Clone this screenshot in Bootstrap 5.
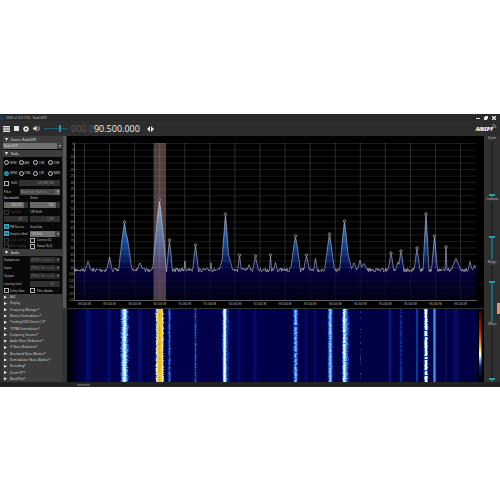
<!DOCTYPE html>
<html lang="en">
<head>
<meta charset="utf-8">
<meta name="viewport" content="width=device-width, initial-scale=1">
<title>SDR# spectrum receiver</title>
<link href="https://cdn.jsdelivr.net/npm/bootstrap@5.3.0/dist/css/bootstrap.min.css" rel="stylesheet">
<style>
body{background:#fff;font-family:"Open Sans","Liberation Sans",sans-serif;font-size:3px;line-height:4px;color:#d8d8d8}
main{padding-top:114px}
.app{background:#2b2b2b}
.titlebar{height:7px;background:#292929;color:#c4c4c4}
.appicon{width:4px;height:4px;background:#163b58;margin-right:2px}
.tools{height:15px;gap:4px;padding:0 3px;background:#2d2d2d}
.tools button,.titlebar button{border:0;background:none;padding:0;line-height:0;color:#e4e4e4}
.tools svg,.titlebar svg{display:block;fill:currentColor}
.freq{font-size:9px;line-height:12px;color:#f2f2f2;margin-right:3px}
.freq .dim{color:#585858}
.brand{font:italic 800 5px/8px "Open Sans",sans-serif;color:#fff}
.waves{margin-left:-5px}
input[type=range]{appearance:none;-webkit-appearance:none;margin:0;background:none}
.volume{width:23px;height:9px}
.volume::-webkit-slider-runnable-track{height:1px;background:#1d6472}
.volume::-webkit-slider-thumb{-webkit-appearance:none;width:2px;height:7px;margin-top:-3px;background:#2498b0}
.side{width:62px;padding-left:3px;background:#303030}
.pane{background:#090909}
.head{height:7px;background:#3d3d3d;padding-left:2px;gap:3px;border:0;color:#e4e4e4;width:100%;text-align:left;font-size:3px;line-height:4px}
.line{padding:0 2px 0 1px;gap:2px}
.h6p{height:6px}.h7p{height:7px}.h8p{height:8px}.h10p{height:10px}.h11p{height:11px}
.line>*{min-width:0}
.field{appearance:none;-webkit-appearance:none;font-size:3px;line-height:4px;height:6px;padding:0 6px 0 1px;border:0;border-radius:0;color:#999;background:#303030;min-width:0;width:100%;display:block}
select.field{background:linear-gradient(#606060,#606060) right/5px 6px no-repeat,#484848}
select.pale{background:linear-gradient(#444,#444) right/5px 6px no-repeat,#707070;color:#ddd}
select.off{background:linear-gradient(#252525,#252525) right/5px 6px no-repeat,#292929;color:#707070}
input.field{text-align:right}
input.bright{background:linear-gradient(#333,#333) right/4px 6px no-repeat,#696969;color:#ddd}
.shiftbox{width:43px}
.withmark{position:relative}
.withmark::after{content:"";position:absolute;right:1px;top:2px;border:1px solid transparent;border-top:2px solid #bbb;pointer-events:none}
.tick{appearance:none;-webkit-appearance:none;width:5px;height:5px;border:1px solid #b5b5b5;margin:0;flex:none;background:#111}
.tick:checked{background:#1c7f9b;border-color:#45a9bd}
.tick:disabled{border-color:#383838}
.dot{border-radius:50%;border-color:#c5c5c5}
.gap1{gap:1px}.lab{width:14px;flex:none}.lab2{width:24px;flex:none}
.off{color:#4f4f4f}
.plugins{height:88px;background:#3b3b3b}
.plugins button{flex:1 1 0;min-height:0;padding:0 0 0 1px;gap:3px;border:0;background:none;color:#dcdcdc;font-size:3px;line-height:4px;text-align:left}
.tri{width:3px;height:3px;background:#eee;clip-path:polygon(0 0,100% 50%,0 100%)}
.open{clip-path:polygon(0 0,100% 0,50% 100%)}
.split{width:5px;background:#343434;padding:0 1px}
.split div{background:#585858;height:172px;width:3px}
.plots{background:#000;min-width:0}
.plots svg{display:block;width:100%;height:auto}
.plots text{font-family:"Liberation Sans",sans-serif;font-size:3px}
.rail{width:16px;background:#303030;color:#ccc;position:relative}
.vert{writing-mode:vertical-lr;direction:ltr;width:8px;flex:none;background:repeating-linear-gradient(transparent 0 3px,#3c3c3c 3px 4px)}
.vert::-webkit-slider-runnable-track{width:2px;background:linear-gradient(to bottom,#222 var(--p),#176675 var(--p))}
.vert::-webkit-slider-thumb{-webkit-appearance:none;width:6px;height:2px;margin-left:-2px;background:#2a9bac}
.z1{height:56px}.z2{height:58px}.z3{height:57px}.z4{height:55px}
.rail label{height:5px;line-height:5px}
.flag{position:absolute;right:0;top:167px;width:3px;height:11px;background:#e6935c}
.foot{height:5px;background:#222;padding-left:77px}
.foot div{width:13px;height:2px;background:#555}
</style>
<script src="https://cdn.jsdelivr.net/npm/bootstrap@5.3.0/dist/js/bootstrap.bundle.min.js"></script>
</head>
<body>
<main>
<div class="app">
  <header>
    <div class="titlebar d-flex align-items-center">
      <span class="appicon"></span><span class="flex-grow-1">SDR# v1.0.0.1700 - RadioSDR</span>
      <div class="d-flex gap-1 pe-1">
        <button aria-label="Minimize"><svg width="4" height="4"><path d="M0 2h4v1H0z"/></svg></button>
        <button aria-label="Restore"><svg width="4" height="4"><path d="M1 0h3v3H3v1H0V1h1z"/></svg></button>
        <button aria-label="Close"><svg width="4" height="4"><path d="M0 0h1l1 1 1-1h1v1L3 2l1 1v1H3L2 3 1 4H0V3l1-1-1-1z"/></svg></button>
      </div>
    </div>
    <div class="tools d-flex align-items-center">
      <button aria-label="Menu"><svg width="7" height="6"><path d="M0 0h7v1.4H0zM0 2.3h7v1.4H0zM0 4.6h7V6H0z"/></svg></button>
      <button aria-label="Stop"><svg width="5" height="5"><path d="M0 0h5v5H0z"/></svg></button>
      <button aria-label="Settings"><svg width="6" height="6" viewBox="0 0 12 12"><path fill-rule="evenodd" d="M5 0h2l.5 1.7L9 1l2 2-.7 1.5L12 5v2l-1.7.5L11 9l-2 2-1.5-.7L7 12H5l-.5-1.7L3 11 1 9l.7-1.5L0 7V5l1.7-.5L1 3l2-2 1.5.7zM6 4a2 2 0 1 0 0 4 2 2 0 0 0 0-4z"/></svg></button>
      <button aria-label="Mute"><svg width="7" height="7" viewBox="0 0 14 14"><path d="M0 5h3l4-4v12L3 9H0z"/><path d="M9 4q2 3 0 6M11 2q4 5 0 10" fill="none" stroke="currentColor"/></svg></button>
      <input class="volume" type="range" aria-label="Volume" min="0" max="100" value="70">
      <span class="freq"><span class="dim">000.0</span>90.500.000</span>
      <button aria-label="Tuning step"><svg width="7" height="6"><path d="M3 0v6L0 3zM4 0v6l3-3z"/></svg></button>
      <span class="brand ms-auto">AIRSPY</span>
      <svg class="waves" width="5" height="9" viewBox="0 0 5 9"><path d="M0 0q4 0 4 4M0 2q2 0 2 2" fill="none" stroke="#aaa" stroke-width=".7"/></svg>
    </div>
  </header>
  <div class="d-flex">
    <aside class="side">
      <div class="pane">
        <button class="head d-flex align-items-center"><i class="tri open"></i>Source: RadioSDR</button>
        <div class="h7p withmark"><select class="field pale" aria-label="Source"><option>RadioSDR</option></select></div>
        <button class="head d-flex align-items-center"><i class="tri open"></i>Radio</button>
        <div id="modes"></div>
        <div class="line h10p d-flex align-items-center"><input class="tick" type="checkbox" id="shift"><label class="flex-grow-1" for="shift">Shift</label><input class="field shiftbox" aria-label="Shift value" value="-120,000,000"></div>
        <div class="line h7p d-flex align-items-center"><label class="lab" for="filter">Filter</label><div class="withmark flex-grow-1"><select id="filter" class="field"><option>Blackman-Harris 4</option></select></div></div>
        <div class="line h6p d-flex align-items-center"><label class="lab2" for="bw">Bandwidth</label><label for="order">Order</label></div>
        <div class="line h8p d-flex align-items-center"><div class="lab2"><input id="bw" class="field bright" value="250,000"></div><input id="order" class="field bright" value="500"></div>
        <div class="line h6p d-flex align-items-center"><div class="lab2 d-flex gap1 align-items-center off"><input class="tick" type="checkbox" id="sq" disabled><label for="sq">Squelch</label></div><label for="cw">CW Shift</label></div>
        <div class="line h8p d-flex align-items-center"><div class="lab2"><input class="field" value="50" aria-label="Squelch level"></div><input id="cw" class="field" value="1,000"></div>
        <div class="line h7p d-flex align-items-center"><div class="lab2 d-flex gap1 align-items-center"><input class="tick" type="checkbox" id="st" checked><label for="st">FM Stereo</label></div><label for="step">Step Size</label></div>
        <div class="line h7p d-flex align-items-center"><div class="lab2 d-flex gap1 align-items-center text-nowrap"><input class="tick" type="checkbox" id="snap" checked><label for="snap">Snap to Grid</label></div><div class="withmark flex-grow-1"><select id="step" class="field pale"><option>100 kHz</option></select></div></div>
        <div class="line h6p d-flex align-items-center text-nowrap"><div class="lab2 d-flex gap1 align-items-center off"><input class="tick" type="checkbox" id="lock" disabled><label for="lock">Lock Carrier</label></div><input class="tick" type="checkbox" id="corr"><label for="corr">Correct IQ</label></div>
        <div class="line h6p d-flex align-items-center text-nowrap"><div class="lab2 d-flex gap1 align-items-center off"><input class="tick" type="checkbox" id="anti" disabled><label for="anti">Anti-Fading</label></div><input class="tick" type="checkbox" id="swap"><label for="swap">Swap I &amp; Q</label></div>
        <button class="head d-flex align-items-center"><i class="tri open"></i>Audio</button>
        <div class="line h8p d-flex align-items-center"><label class="lab2" for="rate">Samplerate</label><div class="withmark flex-grow-1"><select id="rate" class="field off"><option>48000 sample/sec</option></select></div></div>
        <div class="line h8p d-flex align-items-center"><label class="lab2" for="inp">Input</label><div class="withmark flex-grow-1"><select id="inp" class="field off"><option>[MME] Microsoft So</option></select></div></div>
        <div class="line h8p d-flex align-items-center"><label class="lab2" for="outp">Output</label><div class="withmark flex-grow-1"><select id="outp" class="field off"><option>[MME] Microsoft So</option></select></div></div>
        <div class="line h7p d-flex align-items-center"><label class="lab2" for="lat">Latency (ms)</label><input id="lat" class="field" value="50"></div>
        <div class="line h7p d-flex align-items-center"><div class="lab2 d-flex gap1 align-items-center"><input class="tick" type="checkbox" id="unity"><label for="unity">Unity Gain</label></div><input class="tick" type="checkbox" id="fa"><label for="fa">Filter Audio</label></div>
        <div class="plugins d-flex flex-column" id="plugins"></div>
      </div>
    </aside>
    <div class="split"><div></div></div>
    <section class="plots flex-grow-1">
      <svg id="spectrum" viewBox="67 136 417 172" role="img" aria-label="Spectrum"></svg>
      <svg id="fall" viewBox="67 308 417 74" role="img" aria-label="Waterfall"></svg>
    </section>
    <aside class="rail d-flex flex-column align-items-center">
      <label for="zoom">Zoom</label>
      <input id="zoom" class="vert z1" type="range" min="0" max="100" value="98" style="--p:98%">
      <label for="con">Contrast</label>
      <input id="con" class="vert z2" type="range" min="0" max="100" value="61" style="--p:61%">
      <label for="ran">Range</label>
      <input id="ran" class="vert z3" type="range" min="0" max="100" value="29" style="--p:29%">
      <label for="off">Offset</label>
      <input id="off" class="vert z4" type="range" min="0" max="100" value="96" style="--p:96%">
      <span class="flag"></span>
    </aside>
  </div>
  <footer class="foot d-flex align-items-center"><div></div></footer>
</div>
</main>
<script>
let seed = 7;
const rnd = () => (seed = (seed * 16807) % 2147483647) / 2147483647;

// demodulator modes, two rows of four
document.getElementById('modes').innerHTML = [['NFM','AM','LSB','USB'],['WFM','DSB','CW','RAW']].map((r, i) =>
  `<div class="line ${i ? 'h10p' : 'h11p'} d-flex align-items-center">` + r.map(m =>
  `<div class="col d-flex gap1 align-items-center"><input class="tick dot" type="radio" name="mode" id="m${m}" ${m === 'WFM' ? 'checked' : ''}><label for="m${m}">${m}</label></div>`).join('') + '</div>').join('');
document.getElementById('plugins').innerHTML = ['AGC','Display','Frequency Manager*','Meteor Demodulator*','Tracking DSD Client v1.2*','TETRA Demodulator*','Frequency Scanner*','Audio Noise Reduction*','IF Noise Reduction*','Baseband Noise Blanker*','Demodulator Noise Blanker*','Recording*','Zoom FFT*','Band Plan*']
  .map(n => `<button class="d-flex align-items-center"><i class="tri"></i>${n}</button>`).join('');

// signals: centre, top, half width at the noise floor, marker
const peaks = [[88,261,3],[109.5,257,3],[124.5,222,6,1],[127,236,5],[140,262,3],[159.5,200,7,1],[169.5,240,3,1],[185,260,1],[195.5,245,3,1],[211,262,1],
 [225.5,214,4,1],[226,247,7],[239.5,255,2,1],[249,264,2],[255.5,256,3,1],[270.5,255,1,1],[275.5,262,2],[295.5,236,5,1],[306.5,255,3,1],[315.5,258,2],
 [329.5,234,5,1],[344.5,221,5,1],[346,246,6],[354,262,3],[360,260,3],[364,263,4],[391,253,3,1],[401,251,3,1],[398,262,3],[417,248,3,1],[426,214,3,1],
 [434.5,236,3,1],[446,247,1,1],[456,258,5],[470,261,2],[474.5,264,2]];
const pts = [];
for (let x = 74.5; x <= 476; x += .5) {
  let y = 270 + (rnd() - .5) * 4;
  for (const [c, t, w] of peaks) {
    const d = Math.abs(x - c) / w;
    if (d < 1) y = Math.min(y, t + (271 - t) * Math.pow(d, 1.15) + rnd());
  }
  pts.push(x + ',' + y.toFixed(1));
}
let s = `<defs><linearGradient id="g" gradientUnits="userSpaceOnUse" x1="0" y1="198" x2="0" y2="300"><stop stop-color="#7bbcf0"/><stop offset=".25" stop-color="#2b6fbd"/><stop offset=".5" stop-color="#0b3a85"/><stop offset=".7" stop-color="#02023c"/><stop offset="1" stop-color="#000014"/></linearGradient></defs>`;
s += `<polygon points="74.5,300 ${pts.join(' ')} 476,300" fill="url(#g)"/>`;
for (let i = 0; i <= 24; i++) {
  const y = 143.5 + i * 6.53;
  s += `<path d="M74 ${y}H476" stroke="#fff" stroke-opacity="${y > 268 ? .05 : .13}" stroke-width=".8"/><text x="74" y="${y + 1}" text-anchor="end" fill="#999">${i ? -5 * i : 0}</text>`;
}
for (let i = 0; i < 16; i++) {
  const x = 84.5 + i * 25.07;
  s += `<path d="M${x} 143V268" stroke="#fff" stroke-opacity=".22" stroke-width=".8"/><path d="M${x} 268V300" stroke="#fff" stroke-opacity=".08" stroke-width=".8"/><text x="${x}" y="305" text-anchor="middle" fill="#bbb">${(89 + i * .5).toFixed(3)} M</text>`;
}
s += `<path d="M74.5 143V300.5H477" fill="none" stroke="#777" stroke-width=".8"/>`;
s += `<rect x="153.5" y="143" width="12.5" height="157" fill="#d0a49c" fill-opacity=".38"/><path d="M159.7 143V300" stroke="#b33" stroke-opacity=".4" stroke-width=".6"/>`;
s += `<polyline points="${pts.join(' ')}" fill="none" stroke="#dcdcf0" stroke-opacity=".85" stroke-width=".6"/>`;
for (const [c, t, , m] of peaks) if (m) s += `<circle cx="${c}" cy="${t}" r="1.3" fill="#222" stroke="#aaa" stroke-width=".6"/>`;
document.getElementById('spectrum').innerHTML = s;

// waterfall traces
let w = `<defs><linearGradient id="bar" x1="0" y1="0" x2="0" y2="1"><stop stop-color="#400000"/><stop offset=".3" stop-color="#c41800"/><stop offset=".48" stop-color="#f08a10"/><stop offset=".58" stop-color="#ffe860"/><stop offset=".64" stop-color="#fff"/><stop offset=".72" stop-color="#68b0f0"/><stop offset=".82" stop-color="#0a2080"/><stop offset="1" stop-color="#000010"/></linearGradient>
<linearGradient id="edge"><stop stop-color="#000"/><stop offset=".025" stop-color="#000038"/><stop offset=".05" stop-color="#000050"/><stop offset="1" stop-color="#000044"/></linearGradient></defs>
<rect x="67" y="309" width="410" height="73" fill="url(#edge)"/>`;
for (const [x, ww] of [[88,5],[109,4],[140,4],[239,3],[255,3],[306,3],[315,2],[390,3],[401,3],[446,2],[456,5]])
  w += `<rect x="${x - ww / 2}" y="309" width="${ww}" height="73" fill="#0820a0" fill-opacity=".35"/>`;
function trace(c, half, jag, col, op = 1, skip = 0) {
  let d = '';
  for (let y = 309; y < 382; y++) {
    if (rnd() < skip) continue;
    const a = c - half - rnd() * jag, b = c + half + rnd() * jag;
    d += `M${a.toFixed(1)} ${y}H${b.toFixed(1)}V${y + 1}H${a.toFixed(1)}z`;
  }
  w += `<path d="${d}" fill="${col}" fill-opacity="${op}"/>`;
}
trace(124.5, 2.8, 1.8, '#1450c8'); trace(124.5, 1.7, 1.6, '#58a8ff'); trace(124.5, .8, 1.2, '#d6f4ff');
trace(159.7, 3.4, 1.4, '#2860c8'); trace(159.7, 2.8, 1.2, '#fff6cf'); trace(159.7, 2.1, .7, '#f5c928'); trace(159.7, .2, .6, '#d79a10', .7, .3);
trace(169.5, .7, .8, '#1748b8'); trace(169.5, .3, .5, '#3d83ef', .8, .4);
trace(195.5, .7, .5, '#123a9b', .8); trace(195.5, .4, .6, '#4078cc', .6, .5);
trace(225.5, 2.2, 1.5, '#0c38b0'); trace(224.7, 1.4, .8, '#4f9eff'); trace(224.7, .9, .3, '#e8faff');
trace(295.5, 1.5, 1.3, '#1040b8'); trace(295.8, .8, 1, '#4596ff', 1, .1); trace(295.5, .2, .8, '#a8dcff', .8, .4);
trace(330.3, 1.9, .7, '#154cc4'); trace(330.3, 1, .8, '#4c98f8'); trace(330.3, .2, .7, '#b0deff', .8, .4);
trace(345.5, 2.3, 1.6, '#1048c0'); trace(344.9, 1.4, 1.3, '#4da0ff'); trace(344.3, .6, 1, '#e4f8ff', 1, .1);
trace(360.5, .3, .2, '#8098d0', .5, .7);
trace(390, .7, .2, '#0a30a0', .5); trace(401, .6, .8, '#1038a8', .7, .2); trace(417, .9, .2, '#1244b8', .8);
trace(426, 2, .6, '#0f3fb4'); trace(426, 1, .7, '#fff', 1, .16);
trace(434.5, 1.4, .2, '#1450b8'); trace(434.5, .7, .2, '#3e90e8');
w += `<path d="M67 308.5H484" stroke="#333"/><rect x="477" y="309" width="7" height="73"/><rect x="479" y="311" width="2.5" height="68" fill="url(#bar)"/>`;
document.getElementById('fall').innerHTML = w;
</script>
</body>
</html>
